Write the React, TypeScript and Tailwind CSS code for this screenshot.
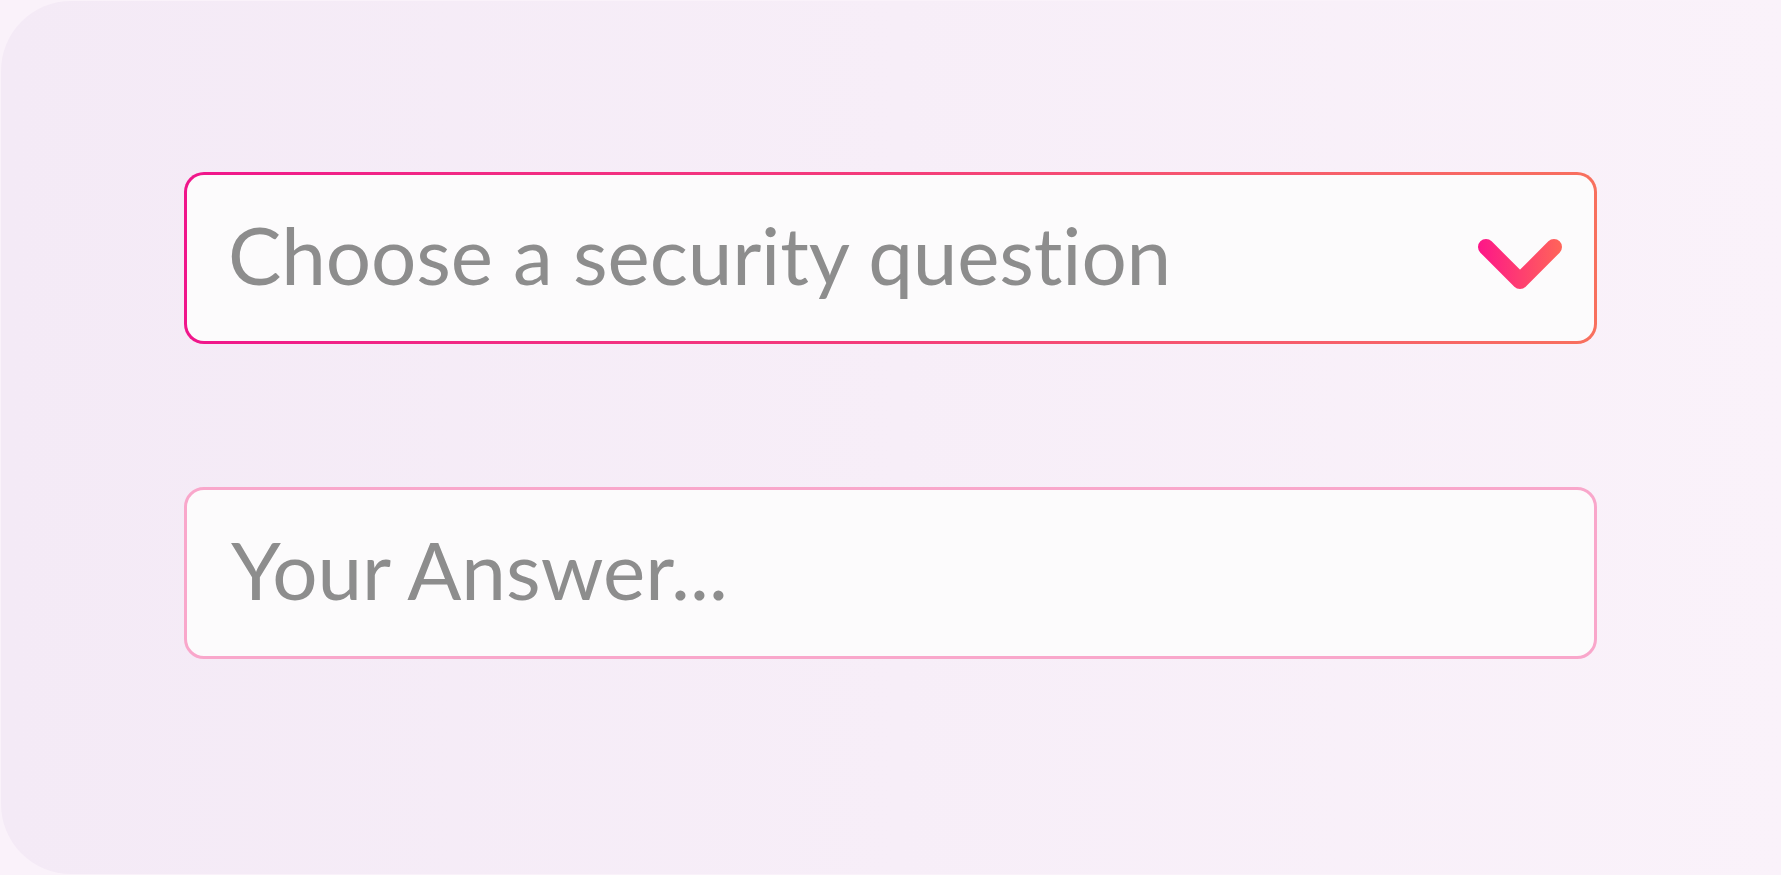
export default function App() {
  return (
    <div className="h-[875px] w-full bg-[#faf2fa] pt-px pl-px overflow-hidden" style={{ fontFamily: 'Lato, "Open Sans", sans-serif' }}>
      <div className="h-[873px] rounded-l-[70px] bg-gradient-to-r from-[#f4eaf6] to-[#faf2fa] pl-[183px] pt-[171px]">
        <div className="w-[1413px] flex flex-col gap-[143px]">
          {/* security question select */}
          <div className="h-[172px] rounded-[20px] p-[3px] bg-gradient-to-r from-[#f0158b] via-[#f43c7a] to-[#f8705e]">
            <div className="h-full rounded-[17px] bg-[#fcfbfc] flex items-center justify-between pl-[41px] pr-[31px]">
              <span className="text-[80px] leading-none text-[#8d8d8d] [font-variant-ligatures:none] tracking-[-0.15px] pb-[8px]">Choose a security question</span>
              <svg className="mt-[14px]" width="86" height="54" viewBox="0 0 86 54" fill="none">
                <defs>
                  <linearGradient id="chev" x1="0" y1="0" x2="86" y2="0" gradientUnits="userSpaceOnUse">
                    <stop offset="0" stopColor="#fd1589" />
                    <stop offset="1" stopColor="#ff6658" />
                  </linearGradient>
                </defs>
                <path d="M9 9 L43 43 L77 9" stroke="url(#chev)" strokeWidth="16" strokeLinecap="round" strokeLinejoin="round" />
              </svg>
            </div>
          </div>

          {/* answer input */}
          <div className="h-[172px] rounded-[20px] border-[3px] border-[#f9a7cb] bg-[#fcfbfc] flex items-center pl-[44px]">
            <span className="text-[80px] leading-none text-[#8d8d8d] [font-variant-ligatures:none] pb-[8px]">Your Answer...</span>
          </div>
        </div>
      </div>
    </div>
  );
}
